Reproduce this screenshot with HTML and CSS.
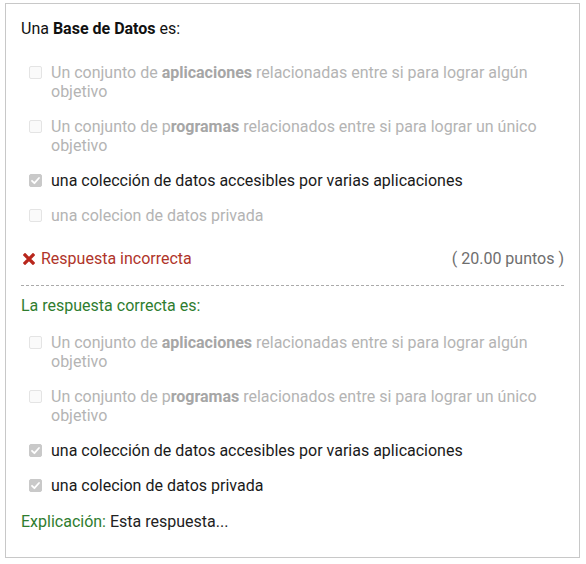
FILE: index.html
```html
<!DOCTYPE html>
<html lang="es">
<head>
<meta charset="utf-8">
<link rel="stylesheet" href="styles.css">
</head>
<body>
<div class="card">
  <div class="question">Una <b>Base de Datos</b> es:</div>
  <ul class="options">
    <li class="opt off"><span class="cb"></span><span class="txt">Un conjunto de <b>aplicaciones</b> relacionadas entre si para lograr algún objetivo</span></li>
    <li class="opt off"><span class="cb"></span><span class="txt">Un conjunto de p<b>rogramas</b> relacionados entre si para lograr un único objetivo</span></li>
    <li class="opt on"><span class="cb checked"><svg viewBox="0 0 13 13" width="13" height="13"><path d="M3 6.8 L5.4 9.2 L10 4" fill="none" stroke="#fff" stroke-width="1.8" stroke-linecap="round" stroke-linejoin="round"/></svg></span><span class="txt">una colección de datos accesibles por varias aplicaciones</span></li>
    <li class="opt off"><span class="cb"></span><span class="txt">una colecion de datos privada</span></li>
  </ul>
  <div class="result">
    <span class="wrong"><svg class="x" viewBox="0 0 12 12" width="12" height="12"><path d="M2 2 L10 10 M10 2 L2 10" stroke="#b8261c" stroke-width="3.2" stroke-linecap="square"/></svg>Respuesta incorrecta</span>
    <span class="points">( 20.00 puntos )</span>
  </div>
  <div class="divider"></div>
  <div class="correct-label">La respuesta correcta es:</div>
  <ul class="options">
    <li class="opt off"><span class="cb"></span><span class="txt">Un conjunto de <b>aplicaciones</b> relacionadas entre si para lograr algún objetivo</span></li>
    <li class="opt off"><span class="cb"></span><span class="txt">Un conjunto de p<b>rogramas</b> relacionados entre si para lograr un único objetivo</span></li>
    <li class="opt on"><span class="cb checked"><svg viewBox="0 0 13 13" width="13" height="13"><path d="M3 6.8 L5.4 9.2 L10 4" fill="none" stroke="#fff" stroke-width="1.8" stroke-linecap="round" stroke-linejoin="round"/></svg></span><span class="txt">una colección de datos accesibles por varias aplicaciones</span></li>
    <li class="opt on"><span class="cb checked"><svg viewBox="0 0 13 13" width="13" height="13"><path d="M3 6.8 L5.4 9.2 L10 4" fill="none" stroke="#fff" stroke-width="1.8" stroke-linecap="round" stroke-linejoin="round"/></svg></span><span class="txt">una colecion de datos privada</span></li>
  </ul>
  <div class="explain"><span class="exp-label">Explicación:</span> Esta respuesta...</div>
</div>
</body>
</html>
```
FILE: styles.css
```css
* { box-sizing: border-box; }
html, body { margin: 0; padding: 0; background: #fff; }
body {
  font-family: Roboto, "Noto Sans", sans-serif;
  font-size: 16px;
  color: #222;
}
.card {
  margin: 3px 0 0 5px;
  width: 575px;
  height: 555px;
  border: 1px solid #c8c8c8;
  padding: 15px 15px 0 15px;
  line-height: 19px;
}
.question { margin-bottom: 25px; color: #111; }
.question b { font-weight: 700; }
.options {
  list-style: none;
  margin: 0;
  padding: 0 0 0 8px;
  display: flex;
  flex-direction: column;
  gap: 16px;
}
.opt { display: flex; align-items: flex-start; line-height: 19px; }
.cb {
  flex: none;
  width: 13px;
  height: 13px;
  margin-top: 3px;
  margin-right: 9px;
  border: 1px solid #e4e4e4;
  border-radius: 2px;
  background: #fafafa;
  display: flex;
}
.cb.checked { background: #c9c9c9; border-color: #c9c9c9; }
.cb svg { margin: -1px; }
.off .txt { color: #b4b4b4; }
.off .txt b { color: #a6a6a6; }
.on .txt { color: #1a1a1a; }
.result {
  margin-top: 24px;
  display: flex;
  justify-content: space-between;
  align-items: center;
}
.wrong { color: #b0352a; display: flex; align-items: center; margin-left: 2px; }
.x { margin-right: 6px; }
.points { color: #6e6e6e; }
.divider {
  margin-top: 17px;
  border-top: 1px dashed #aaa;
}
.correct-label { color: #2f7d2f; margin-top: 10px; margin-bottom: 18px; }
.explain { margin-top: 17px; color: #222; }
.exp-label { color: #2f7d2f; }
```
